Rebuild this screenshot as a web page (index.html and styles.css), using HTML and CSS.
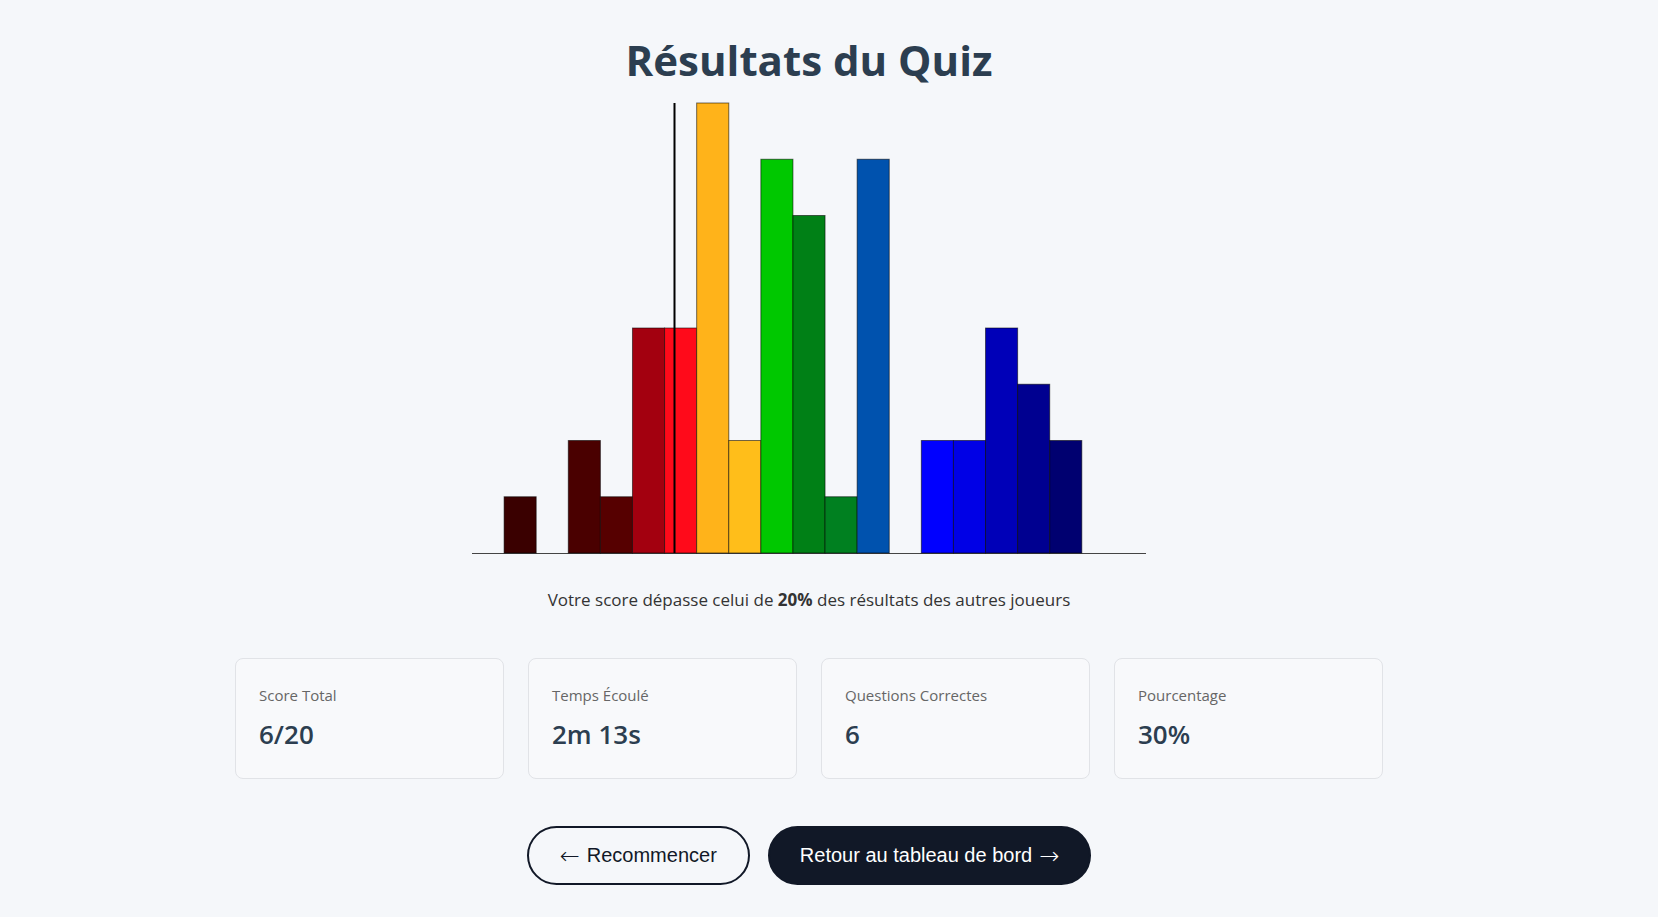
FILE: index.html
```html
<!DOCTYPE html>
<html lang="fr">
<head>
  <meta charset="UTF-8">
  <title>Résultats du Quiz</title>
  <link rel="stylesheet" href="styles.css">
</head>
<body>

<div class="results">
  <h1>Résultats du Quiz</h1>

  <div class="chart">
    <svg id="histogram" width="674" height="452" viewBox="0 0 674 452"></svg>
  </div>

  <p class="rank">Votre score dépasse celui de <strong>20%</strong> des résultats des autres joueurs</p>

  <div class="stats">
    <div class="stat-card">
      <div class="stat-label">Score Total</div>
      <div class="stat-value">6/20</div>
    </div>
    <div class="stat-card">
      <div class="stat-label">Temps Écoulé</div>
      <div class="stat-value">2m 13s</div>
    </div>
    <div class="stat-card">
      <div class="stat-label">Questions Correctes</div>
      <div class="stat-value">6</div>
    </div>
    <div class="stat-card">
      <div class="stat-label">Pourcentage</div>
      <div class="stat-value">30%</div>
    </div>
  </div>

  <div class="actions">
    <a class="btn btn-outline" href="quiz.html"><span class="arrow">&larr;</span> Recommencer</a>
    <a class="btn btn-dark" href="dashboard.html">Retour au tableau de bord <span class="arrow">&rarr;</span></a>
  </div>
</div>

<script>
  const svg = document.getElementById("histogram");
  const ns = "http://www.w3.org/2000/svg";

  // one entry per score bucket (0 = empty)
  const counts = [0, 1, 0, 2, 1, 4, 4, 8, 2, 7, 6, 1, 7, 0, 2, 2, 4, 3, 2, 0, 0];
  const colors = [
    "", "#3a0000", "", "#4a0000", "#560000", "#a3000f", "#ff0a1a",
    "#ffb31a", "#ffbe1a", "#00c800", "#008016", "#008020", "#0052ae", "",
    "#0000ff", "#0000e6", "#0000b8", "#000090", "#000070", "", ""
  ];

  const width = 674;
  const base = 451;
  const binW = width / counts.length;
  const unit = 450 / Math.max(...counts);

  const axis = document.createElementNS(ns, "line");
  axis.setAttribute("x1", 0);
  axis.setAttribute("x2", width);
  axis.setAttribute("y1", base + 0.5);
  axis.setAttribute("y2", base + 0.5);
  axis.setAttribute("class", "axis");
  svg.appendChild(axis);

  counts.forEach((c, i) => {
    if (!c) return;
    const rect = document.createElementNS(ns, "rect");
    rect.setAttribute("x", i * binW);
    rect.setAttribute("y", base - c * unit);
    rect.setAttribute("width", binW);
    rect.setAttribute("height", c * unit);
    rect.setAttribute("fill", colors[i]);
    rect.setAttribute("class", "bar");
    svg.appendChild(rect);
  });

  // player's position
  const marker = document.createElementNS(ns, "line");
  marker.setAttribute("x1", 202.5);
  marker.setAttribute("x2", 202.5);
  marker.setAttribute("y1", 1);
  marker.setAttribute("y2", base);
  marker.setAttribute("class", "marker");
  svg.appendChild(marker);
</script>

</body>
</html>
```

FILE: styles.css
```css
body {
  font-family: 'Open Sans', 'Noto Sans', sans-serif;
  background: #f5f7fa;
  color: #333;
  margin: 0;
  padding-right: 40px;
}

.results {
  max-width: 1148px;
  margin: 0 auto;
  padding-top: 32px;
  text-align: center;
}

h1 {
  font-size: 42px;
  font-weight: bold;
  color: #2c3e50;
  margin: 0;
  line-height: 56px;
}

.chart {
  display: flex;
  justify-content: center;
  margin-top: 14px;
}

.chart svg {
  display: block;
}

.axis {
  stroke: #444;
  stroke-width: 1;
}

.bar {
  stroke: rgba(0,0,0,0.55);
  stroke-width: 1;
}

.marker {
  stroke: #000;
  stroke-width: 2;
}

.rank {
  font-size: 17px;
  margin: 34px 0 0;
  line-height: 24px;
}

.stats {
  display: grid;
  grid-template-columns: repeat(4, 1fr);
  gap: 24px;
  margin-top: 46px;
  text-align: left;
}

.stat-card {
  background: #f8f9fb;
  border: 1px solid #e1e3e7;
  border-radius: 8px;
  padding: 26px 23px 20px;
  height: 121px;
  box-sizing: border-box;
}

.stat-label {
  font-size: 15px;
  color: #666;
  line-height: 20px;
}

.stat-value {
  font-size: 26px;
  font-weight: 600;
  color: #2c3e50;
  margin-top: 12px;
  line-height: 34px;
}

.actions {
  display: flex;
  justify-content: center;
  gap: 18px;
  margin-top: 47px;
}

.btn {
  display: inline-flex;
  align-items: center;
  gap: 7px;
  height: 59px;
  box-sizing: border-box;
  padding: 0 31px;
  border-radius: 999px;
  font-family: 'Liberation Sans', Arial, sans-serif;
  font-size: 20px;
  text-decoration: none;
}

.arrow {
  font-family: 'DejaVu Sans', sans-serif;
  font-weight: 200;
  font-size: 24px;
  line-height: 1;
}

.btn-outline {
  border: 2px solid #111827;
  color: #111827;
  background: transparent;
}

.btn-dark {
  background: #111827;
  color: white;
  border: 2px solid #111827;
  padding: 0 30px;
}
```
